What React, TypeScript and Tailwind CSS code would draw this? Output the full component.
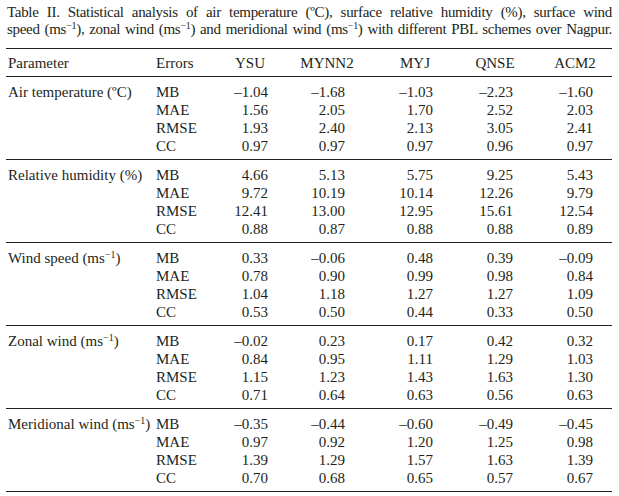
import React from "react";

type Row = [string, string, string, string, string, string];
type Section = { label: React.ReactNode; rows: Row[] };

const Sup = () => (
  <sup className="text-[10px]">−1</sup>
);

const sections: Section[] = [
  {
    label: <>Air temperature (ºC)</>,
    rows: [
      ["MB", "–1.04", "–1.68", "–1.03", "–2.23", "–1.60"],
      ["MAE", "1.56", "2.05", "1.70", "2.52", "2.03"],
      ["RMSE", "1.93", "2.40", "2.13", "3.05", "2.41"],
      ["CC", "0.97", "0.97", "0.97", "0.96", "0.97"],
    ],
  },
  {
    label: <>Relative humidity (%)</>,
    rows: [
      ["MB", "4.66", "5.13", "5.75", "9.25", "5.43"],
      ["MAE", "9.72", "10.19", "10.14", "12.26", "9.79"],
      ["RMSE", "12.41", "13.00", "12.95", "15.61", "12.54"],
      ["CC", "0.88", "0.87", "0.88", "0.88", "0.89"],
    ],
  },
  {
    label: (
      <>
        Wind speed (ms<Sup />)
      </>
    ),
    rows: [
      ["MB", "0.33", "–0.06", "0.48", "0.39", "–0.09"],
      ["MAE", "0.78", "0.90", "0.99", "0.98", "0.84"],
      ["RMSE", "1.04", "1.18", "1.27", "1.27", "1.09"],
      ["CC", "0.53", "0.50", "0.44", "0.33", "0.50"],
    ],
  },
  {
    label: (
      <>
        Zonal wind (ms<Sup />)
      </>
    ),
    rows: [
      ["MB", "–0.02", "0.23", "0.17", "0.42", "0.32"],
      ["MAE", "0.84", "0.95", "1.11", "1.29", "1.03"],
      ["RMSE", "1.15", "1.23", "1.43", "1.63", "1.30"],
      ["CC", "0.71", "0.64", "0.63", "0.56", "0.63"],
    ],
  },
  {
    label: (
      <>
        Meridional wind (ms<Sup />)
      </>
    ),
    rows: [
      ["MB", "–0.35", "–0.44", "–0.60", "–0.49", "–0.45"],
      ["MAE", "0.97", "0.92", "1.20", "1.25", "0.98"],
      ["RMSE", "1.39", "1.29", "1.57", "1.63", "1.39"],
      ["CC", "0.70", "0.68", "0.65", "0.57", "0.67"],
    ],
  },
];

const headers = ["YSU", "MYNN2", "MYJ", "QNSE", "ACM2"];

const grid = "grid grid-cols-[150px_44px_68px_77px_88px_80px_80px_19px]";

const Rule = () => <div className="h-px bg-[#231f20]" />;

export default function App() {
  return (
    <div
      className="w-[619px] h-[496px] bg-white text-[#231f20] text-[15px] pl-[6px] pr-[7px] overflow-hidden"
      style={{ fontFamily: '"Liberation Serif", "Times New Roman", serif' }}
    >
      <div className="pt-[4px] pl-[1px] leading-[17px] tracking-[-0.3px] [word-spacing:-1px]">
        <div className="whitespace-nowrap text-justify [text-align-last:justify]">
          Table II. Statistical analysis of air temperature (ºC), surface relative humidity (%), surface wind
        </div>
        <div className="whitespace-nowrap text-justify [text-align-last:justify]">
          speed (ms<Sup />), zonal wind (ms<Sup />) and meridional wind (ms<Sup />) with different PBL schemes over Nagpur.
        </div>
      </div>
      <div className="mt-[10px]">
        <Rule />
        <div className={`${grid} leading-[18px] pt-[5px] pb-[4px]`}>
          <div className="pl-[2px]">Parameter</div>
          <div>Errors</div>
          {headers.map((h) => (
            <div key={h} className="flex justify-end">
              <div className="w-[36px] flex justify-center whitespace-nowrap">{h}</div>
            </div>
          ))}
          <div />
        </div>
        <Rule />
        {sections.map((s, si) => (
          <div key={si}>
            <div className={`${grid} leading-[18px] pt-[6px] pb-[4px]`}>
              {s.rows.map((r, ri) => (
                <React.Fragment key={ri}>
                  <div className="pl-[2px] whitespace-nowrap">{ri === 0 ? s.label : ""}</div>
                  <div>{r[0]}</div>
                  {r.slice(1).map((v, vi) => (
                    <div key={vi} className="text-right">
                      {v}
                    </div>
                  ))}
                  <div />
                </React.Fragment>
              ))}
            </div>
            <Rule />
          </div>
        ))}
      </div>
    </div>
  );
}
